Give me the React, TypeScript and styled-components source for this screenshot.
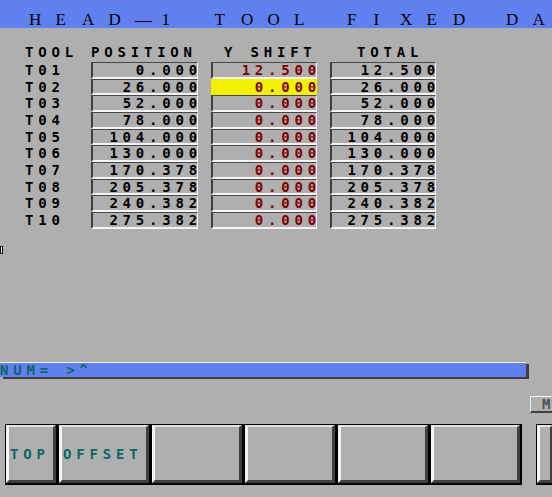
import { createGlobalStyle, styled } from 'styled-components';

const GlobalStyle = createGlobalStyle`
  html, body {
    margin: 0;
    padding: 0;
    background: #afafaf;
    overflow: hidden;
  }
  #root {
    width: 552px;
    height: 497px;
    overflow: hidden;
  }
`;

const Screen = styled.div`
  width: 552px;
  height: 497px;
  background: #afafaf;
  display: flex;
  flex-direction: column;
  overflow: hidden;
  font-family: 'DejaVu Sans Mono', monospace;
  font-weight: bold;
  font-size: 14px;
  line-height: 14px;
  letter-spacing: 4.8px;
`;

const TitleBar = styled.div`
  flex: none;
  height: 28px;
  box-sizing: border-box;
  background: #6080f0;
  display: flex;
  align-items: flex-end;
  padding-left: 29px;
  white-space: nowrap;
  font-family: 'Liberation Serif', serif;
  font-weight: normal;
  font-size: 17px;
  line-height: 1;
  letter-spacing: 0;
  color: #000;
`;

const TitleChar = styled.span`
  flex: none;
  display: inline-block;
  width: 26.5px;
`;

const Table = styled.div`
  flex: none;
  display: grid;
  grid-template-columns: 53px 107px 106px 106px;
  column-gap: 13px;
  grid-template-rows: 18px;
  grid-auto-rows: 16.667px;
  margin: 16px 0 0 25px;
  color: #000;
`;

const HeadCell = styled.div<{ $indent: number }>`
  padding: 1px 0 0 ${(p) => p.$indent}px;
  white-space: nowrap;
`;

const ToolCell = styled.div`
  padding-top: 1px;
`;

const ValueCell = styled.div<{ $red?: boolean; $hl?: boolean }>`
  box-sizing: border-box;
  height: 100%;
  border-top: 1px solid ${(p) => (p.$hl ? '#f2f200' : '#484848')};
  border-left: 2px solid ${(p) => (p.$hl ? '#f2f200' : '#404040')};
  border-right: 1px solid ${(p) => (p.$hl ? '#f2f200' : '#f4f4f4')};
  border-bottom: 2px solid ${(p) => (p.$hl ? '#f2f200' : '#f4f4f4')};
  background: ${(p) => (p.$hl ? '#f2f200' : 'transparent')};
  color: ${(p) => (p.$red ? '#800000' : '#000')};
  text-align: right;
  white-space: nowrap;
`;

const Num = styled.span`
  margin-right: -5px;
`;

const Cursor = styled.div`
  flex: none;
  width: 3px;
  height: 8px;
  box-sizing: border-box;
  margin-top: 17.5px;
  border: 1px solid #000;
  background: #fff;
`;

const CommandBar = styled.div`
  flex: none;
  width: 526px;
  height: 15px;
  box-sizing: border-box;
  margin-top: 108px;
  border-top: 1px solid #f4f4f4;
  background: #6080f0;
  box-shadow: 3px 2px 0 #404040;
  color: #0f6464;
  white-space: pre;
`;

const MenuRow = styled.div`
  flex: none;
  display: flex;
  justify-content: flex-end;
  margin-top: 19px;
`;

const MenuKey = styled.div`
  flex: none;
  width: 22px;
  height: 17px;
  box-sizing: border-box;
  border-top: 1px solid #f4f4f4;
  border-left: 1px solid #f4f4f4;
  border-bottom: 2px solid #404040;
  padding-left: 11px;
  color: #505050;
  letter-spacing: 0;
`;

const SoftRow = styled.div`
  flex: none;
  display: flex;
  gap: 14px;
  margin-top: 11px;
  padding-left: 5px;
`;

const KeyGroup = styled.div`
  flex: none;
  display: flex;
  gap: 3px;
  height: 61px;
  box-sizing: border-box;
  padding: 1px 2px 2px 1px;
  background: #000;
`;

const SoftKey = styled.div<{ $w: number }>`
  flex: none;
  box-sizing: border-box;
  width: ${(p) => p.$w}px;
  height: 58px;
  background: #afafaf;
  border-top: 2px solid #e4e4e4;
  border-left: 3px solid #f4f4f4;
  border-right: 3px solid #404040;
  border-bottom: 3px solid #404040;
  display: flex;
  align-items: center;
  padding-left: 1px;
  color: #0f6464;
  white-space: nowrap;
`;

const title = 'HEAD—1 TOOL FIXED DA';

const headers = [
  { label: 'TOOL', indent: 0 },
  { label: 'POSITION', indent: 0 },
  { label: 'Y SHIFT', indent: 13 },
  { label: 'TOTAL', indent: 27 },
];

const rows = [
  ['T01', '0.000', '12.500', '12.500'],
  ['T02', '26.000', '0.000', '26.000'],
  ['T03', '52.000', '0.000', '52.000'],
  ['T04', '78.000', '0.000', '78.000'],
  ['T05', '104.000', '0.000', '104.000'],
  ['T06', '130.000', '0.000', '130.000'],
  ['T07', '170.378', '0.000', '170.378'],
  ['T08', '205.378', '0.000', '205.378'],
  ['T09', '240.382', '0.000', '240.382'],
  ['T10', '275.382', '0.000', '275.382'],
];

const softKeys = [
  { label: 'TOP', w: 50 },
  { label: 'OFFSET', w: 90 },
  { label: '', w: 90 },
  { label: '', w: 90 },
  { label: '', w: 90 },
  { label: '', w: 89 },
];

export default function App() {
  return (
    <>
      <GlobalStyle />
      <Screen>
        <TitleBar>
          {title.split('').map((ch, i) => (
            <TitleChar key={i}>{ch}</TitleChar>
          ))}
        </TitleBar>

        <Table>
          {headers.map((h) => (
            <HeadCell key={h.label} $indent={h.indent}>
              {h.label}
            </HeadCell>
          ))}
          {rows.map(([tool, pos, shift, total]) => [
            <ToolCell key={tool}>{tool}</ToolCell>,
            <ValueCell key={tool + 'p'}>
              <Num>{pos}</Num>
            </ValueCell>,
            <ValueCell key={tool + 's'} $red $hl={tool === 'T02'}>
              <Num>{shift}</Num>
            </ValueCell>,
            <ValueCell key={tool + 't'}>
              <Num>{total}</Num>
            </ValueCell>,
          ])}
        </Table>

        <Cursor />

        <CommandBar>{'NUM= >^'}</CommandBar>

        <MenuRow>
          <MenuKey>M</MenuKey>
        </MenuRow>

        <SoftRow>
          <KeyGroup>
            {softKeys.map((k, i) => (
              <SoftKey key={i} $w={k.w}>
                {k.label}
              </SoftKey>
            ))}
          </KeyGroup>
          <KeyGroup>
            <SoftKey $w={16} />
          </KeyGroup>
        </SoftRow>
      </Screen>
    </>
  );
}
